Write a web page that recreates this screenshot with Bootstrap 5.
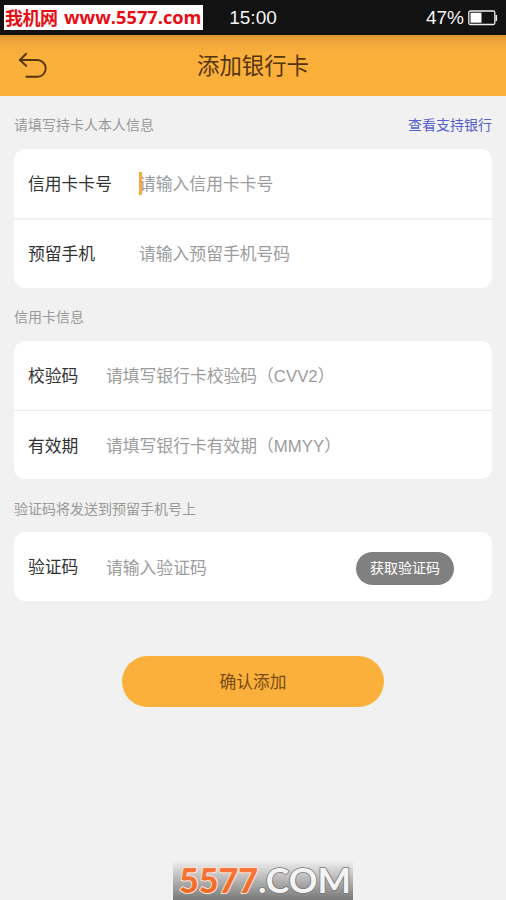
<!DOCTYPE html>
<html lang="zh-CN">
<head>
<meta charset="utf-8">
<meta name="viewport" content="width=device-width, initial-scale=1">
<title>添加银行卡</title>
<link href="https://cdn.jsdelivr.net/npm/bootstrap@5.3.0/dist/css/bootstrap.min.css" rel="stylesheet">
<style>
body{font-family:"Liberation Sans","Noto Sans CJK SC",sans-serif;background:#f1f1f1;color:#333;line-height:1.5}
.screen{height:900px}
.status{height:35px;background:#121212;font-size:19px;line-height:35px;color:#f4f4f4}
.site-tag{left:4px;top:5px;width:199px;height:25px;background:#fff;overflow:visible}
.titlebar{height:61px;background:linear-gradient(#dd9731 0,#eca338 5px,#f8ac3b 14px,#fcb03c 21px);color:#54360c}
.titlebar h1{font-size:22.4px;line-height:63px}
.back{left:18px;top:17px}
.form-body{width:478px}
.hint{height:53px;padding-top:7px;font-size:14px;color:#999}
.first-hint{padding-top:6px}
.hint a{color:#5560cf}
.panel{border:0;border-radius:11px;overflow:hidden}
.field{height:69px;padding:3px 38px 0 14px;border:0;font-size:16.8px;color:#333}
.field+.field{height:69.5px;border-top:1px solid #e9e9e9}
.wide .field{height:68.5px;padding-top:2px}
.wide .field+.field{height:70px;border-top:2px solid #f2f2f2}
.field label{width:78px;flex:none}
.wide label{width:111px}
.field input{font-size:16.8px;line-height:25px;color:#333;background:none}
.field input::placeholder{color:#9c9c9c;opacity:1}
.caret{left:125px;top:23px;width:3px;height:23px;background:#f7a93e}
.code-btn{width:98px;height:33px;padding-top:6px;font-size:14px;background:#808080;color:#fff;flex:none}
.submit{width:262px;height:51px;margin-top:55px;padding-top:9px;background:#fcb03c;color:#754c10;font-size:16.8px}
.footer-logo{left:173px;top:860px}
</style>
</head>
<body>
<div class="screen position-relative overflow-hidden">
  <header>
    <div class="status position-relative d-flex justify-content-center">
      <svg class="site-tag position-absolute" viewBox="0 0 199 25">
        <g fill="#e60d14" font-weight="700">
          <text x="1" y="19.5" font-family="Noto Sans CJK SC" font-size="18" textLength="53">我机网</text>
          <text x="60" y="19" font-family="Open Sans" font-size="18.5" textLength="137.5" lengthAdjust="spacingAndGlyphs">www.5577.com</text>
        </g>
      </svg>
      <span>15:00</span>
      <div class="position-absolute end-0 top-0 d-flex align-items-center">
        <span class="me-1">47%</span>
        <svg width="38" height="16" viewBox="0 0 38 16" fill="none"><rect x=".8" y="1" width="26" height="13.5" rx="1.5" stroke="#eee" stroke-width="1.3"/><path d="M2.5 2.7h11v10h-11z" fill="#fff"/><path d="M28.3 5v6" stroke="#eee" stroke-width="1.6"/></svg>
      </div>
    </div>
    <div class="titlebar position-relative text-center">
      <svg class="back position-absolute" width="30" height="28" viewBox="0 0 30 28" fill="none" stroke="#54360c" stroke-width="1.9" stroke-linecap="round" stroke-linejoin="round"><path d="M8.2 1.8 1.8 8l6.4 5.8M2 8h17.3a8.4 8.4 0 0 1 0 16.8H8.4"/></svg>
      <h1 class="m-0 fw-normal">添加银行卡</h1>
    </div>
  </header>
  <main>
    <form class="mx-auto d-flex flex-column form-body">
      <div class="hint first-hint d-flex justify-content-between align-items-center"><span>请填写持卡人本人信息</span><a href="#" class="text-decoration-none">查看支持银行</a></div>
      <div class="panel card wide">
        <div class="field d-flex align-items-center position-relative"><label for="card">信用卡卡号</label><input id="card" class="form-control border-0 p-0" placeholder="请输入信用卡卡号"><i class="caret position-absolute"></i></div>
        <div class="field d-flex align-items-center"><label for="phone">预留手机</label><input id="phone" class="form-control border-0 p-0" placeholder="请输入预留手机号码"></div>
      </div>
      <div class="hint d-flex align-items-center">信用卡信息</div>
      <div class="panel card">
        <div class="field d-flex align-items-center"><label for="cvv">校验码</label><input id="cvv" class="form-control border-0 p-0" placeholder="请填写银行卡校验码（CVV2）"></div>
        <div class="field d-flex align-items-center"><label for="exp">有效期</label><input id="exp" class="form-control border-0 p-0" placeholder="请填写银行卡有效期（MMYY）"></div>
      </div>
      <div class="hint d-flex align-items-center">验证码将发送到预留手机号上</div>
      <div class="panel card">
        <div class="field d-flex align-items-center"><label for="code">验证码</label><input id="code" class="form-control border-0 p-0" placeholder="请输入验证码"><button type="button" class="code-btn btn rounded-pill border-0 px-0">获取验证码</button></div>
      </div>
      <button type="button" class="submit btn rounded-pill border-0 align-self-center">确认添加</button>
    </form>
  </main>
  <svg class="footer-logo position-absolute" width="180" height="40" viewBox="0 0 180 40">
    <defs>
      <linearGradient id="plate" x2="0" y2="1"><stop stop-color="#f1f1f1"/><stop offset="1" stop-color="#787878"/></linearGradient>
      <linearGradient id="digits" x2="0" y2="1"><stop stop-color="#ff7846"/><stop offset="1" stop-color="#e7691f"/></linearGradient>
    </defs>
    <path fill="url(#plate)" d="M0 0h180v40H0z"/>
    <g font-weight="900" font-family="Lato,sans-serif" font-size="34" stroke-linejoin="round" paint-order="stroke">
      <text x="6" y="32.5" fill="url(#digits)" stroke="#ffe4d5" stroke-width="2" textLength="79" lengthAdjust="spacingAndGlyphs">5577</text>
      <text x="85" y="32.5" font-weight="700" fill="#f4f4f4" stroke="#777" stroke-width="1.6" textLength="93" lengthAdjust="spacingAndGlyphs">.COM</text>
    </g>
  </svg>
</div>
<script src="https://cdn.jsdelivr.net/npm/bootstrap@5.3.0/dist/js/bootstrap.bundle.min.js"></script>
</body>
</html>
